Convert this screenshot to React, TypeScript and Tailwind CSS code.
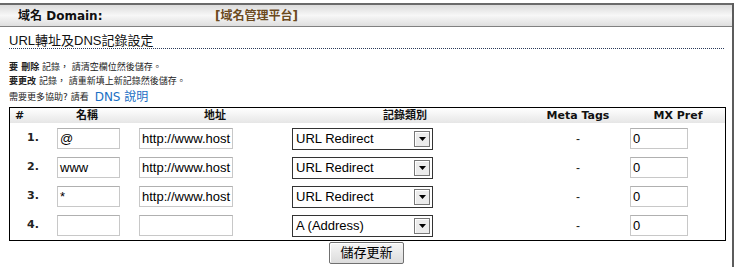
import React from 'react';

const cjk = '"DejaVu Sans", Verdana, "Noto Sans CJK TC", sans-serif';
const arial = '"Liberation Sans", Arial, "Noto Sans CJK TC", sans-serif';

const rows = [
  { n: '1.', name: '@', addr: 'http://www.host', type: 'URL Redirect' },
  { n: '2.', name: 'www', addr: 'http://www.host', type: 'URL Redirect' },
  { n: '3.', name: '*', addr: 'http://www.host', type: 'URL Redirect' },
  { n: '4.', name: '', addr: '', type: 'A (Address)' },
];

const Box = ({ value, w }: { value: string; w: string }) => (
  <div
    className={`h-[21px] ${w} border border-[#c8c8c8] border-t-[#b0b0b0] bg-white px-[2px] flex items-center text-[13px] text-black overflow-hidden whitespace-nowrap`}
    style={{ fontFamily: arial }}
  >
    {value}
  </div>
);

const Dropdown = ({ value }: { value: string }) => (
  <div
    className="h-[22px] w-[141px] border border-[#333] bg-white flex items-center justify-between pl-[3px] pr-[2px] text-[13px] text-black"
    style={{ fontFamily: arial }}
  >
    <span>{value}</span>
    <div className="h-[16px] w-[16px] border border-[#777] bg-[#ececec] flex items-center justify-center shadow-[inset_1px_1px_0_#fff]">
      <svg width="7" height="4" viewBox="0 0 7 4">
        <path d="M0 0h7L3.5 4z" fill="#000" />
      </svg>
    </div>
  </div>
);

export default function App() {
  return (
    <div className="w-[735px] h-[267px] bg-white pt-[3px] overflow-hidden" style={{ fontFamily: cjk }}>
      <div className="w-[734px] h-[264px] border-r-2 border-[#5c5c5c]">
        {/* top bar */}
        <div className="h-[24px] border-t-2 border-b border-t-[#6a6a6a] border-b-[#808080] bg-gradient-to-b from-[#dcdcdc] via-[#f7f7f7] to-[#dedede] flex items-center text-[12px] font-bold text-[#111]">
          <span className="ml-[18px] w-[197px]">域名 Domain:</span>
          <span className="text-[#6b4a1e]">[域名管理平台]</span>
        </div>

        <div className="pl-[9px] pr-[8px]">
          <div className="mt-[6px] border-b border-dotted border-[#2a3a5a] text-[13px] text-[#111] leading-[15px]" style={{ fontFamily: arial }}>
            URL轉址及DNS記錄設定
          </div>

          <div className="mt-[11px] text-[9px] leading-[14px] text-[#222]">
            <div><b>要 刪除</b> 記錄， 請清空欄位然後儲存。</div>
            <div><b>要更改</b> 記錄， 請重新填上新記錄然後儲存。</div>
            <div className="flex items-center h-[18px]">
              <span>需要更多協助? 請看</span>
              <span className="ml-[6px] text-[12px] text-[#1a6fc4]">DNS 說明</span>
            </div>
          </div>

          <div className="mt-[1px] w-[717px] border border-black">
            <div className="h-[15px] bg-gradient-to-b from-white to-[#e6e6e6] flex items-center text-[11px] font-bold text-[#111] leading-none whitespace-nowrap">
              <span className="w-[47px] pl-[5px]">#</span>
              <span className="w-[60px] flex justify-center">名稱</span>
              <span className="w-[196px] flex justify-center">地址</span>
              <span className="w-[184px] flex justify-center">記錄類別</span>
              <span className="w-[162px] flex justify-center">Meta Tags</span>
              <span className="w-[38px] flex justify-center">MX Pref</span>
            </div>
            <div className="pt-[1px]">
              {rows.map((r) => (
                <div key={r.n} className="h-[29px] flex items-center">
                  <span className="w-[47px] pl-[17px] text-[11px] font-bold text-[#222]">{r.n}</span>
                  <Box value={r.name} w="w-[63px]" />
                  <span className="w-[19px]" />
                  <Box value={r.addr} w="w-[94px]" />
                  <span className="w-[59px]" />
                  <Dropdown value={r.type} />
                  <span className="w-[97px]" />
                  <span className="w-[96px] text-center text-[12px] text-[#222]" style={{ fontFamily: arial }}>-</span>
                  <span className="w-[4px]" />
                  <Box value="0" w="w-[58px]" />
                </div>
              ))}
            </div>
          </div>

          <div className="flex justify-center mt-[1px]">
            <div
              className="h-[22px] w-[75px] border border-[#707070] rounded-[2px] bg-gradient-to-b from-[#f6f6f6] to-[#dcdcdc] flex items-center justify-center text-[13px] text-black shadow-[inset_1px_1px_0_#fff]"
              style={{ fontFamily: arial }}
            >
              儲存更新
            </div>
          </div>
        </div>
      </div>
    </div>
  );
}
